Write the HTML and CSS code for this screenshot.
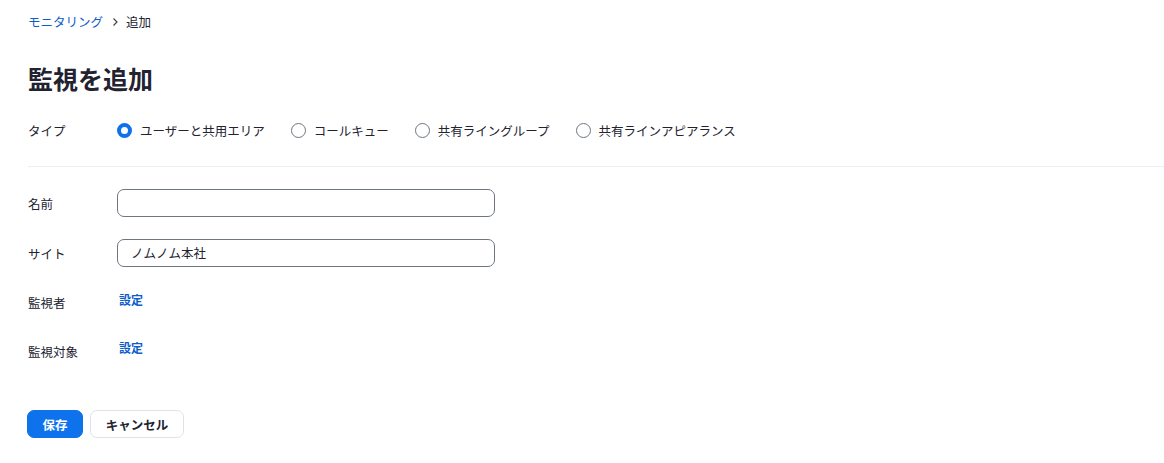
FILE: index.html
```html
<!DOCTYPE html>
<html lang="ja">

<head>
    <meta charset="utf-8">
    <title>監視を追加</title>
    <link rel="stylesheet" href="styles.css">
</head>

<body>
    <div class="page">
        <nav class="breadcrumb">
            <a href="#" class="crumb-link">モニタリング</a>
            <span class="crumb-sep">
                <svg width="8" height="10" viewBox="0 0 8 10"><path d="M2.5 1.5 L6 5 L2.5 8.5" fill="none" stroke="#444" stroke-width="1.2"/></svg>
            </span>
            <span class="crumb-current">追加</span>
        </nav>

        <h1 class="title">監視を追加</h1>

        <div class="type-row">
            <div class="label">タイプ</div>
            <div class="radio-group">
                <label class="radio-item"><span class="radio checked"></span>ユーザーと共用エリア</label>
                <label class="radio-item"><span class="radio"></span>コールキュー</label>
                <label class="radio-item"><span class="radio"></span>共有ライングループ</label>
                <label class="radio-item"><span class="radio"></span>共有ラインアピアランス</label>
            </div>
        </div>

        <div class="divider"></div>

        <div class="field-row">
            <div class="label">名前</div>
            <div class="input"></div>
        </div>

        <div class="field-row">
            <div class="label">サイト</div>
            <div class="input">ノムノム本社</div>
        </div>

        <div class="link-row">
            <div class="label">監視者</div>
            <a href="#" class="set-link">設定</a>
        </div>

        <div class="link-row">
            <div class="label label-low">監視対象</div>
            <a href="#" class="set-link">設定</a>
        </div>

        <div class="actions">
            <button class="btn btn-primary">保存</button>
            <button class="btn btn-default">キャンセル</button>
        </div>
    </div>
</body>

</html>
```

FILE: styles.css
```css
* {
    box-sizing: border-box;
    margin: 0;
    padding: 0;
}

body {
    background: #ffffff;
    color: #222230;
    font-family: "Noto Sans CJK JP", "Noto Sans", sans-serif;
    font-size: 12.5px;
}

.page {
    padding: 14px 0 0 28px;
}

.breadcrumb {
    display: flex;
    align-items: center;
    height: 16px;
    line-height: 16px;
}

.crumb-link {
    color: #0e5ec9;
    text-decoration: none;
}

.crumb-sep {
    display: flex;
    width: 23px;
    justify-content: center;
}

.crumb-current {
    color: #222230;
}

.title {
    margin-top: 32px;
    font-size: 25px;
    line-height: 32px;
    font-weight: 700;
    color: #222230;
}

.label {
    width: 89px;
    flex-shrink: 0;
    color: #222230;
}

.type-row {
    margin-top: 24px;
    height: 24px;
    display: flex;
    align-items: center;
}

.radio-group {
    display: flex;
    align-items: center;
    gap: 26px;
}

.radio-item {
    display: flex;
    align-items: center;
    gap: 8px;
}

.radio {
    width: 15px;
    height: 15px;
    border-radius: 50%;
    border: 1px solid #6e7680;
    background: #ffffff;
}

.radio.checked {
    border: 4px solid #0e72ed;
}

.divider {
    margin-top: 24px;
    border-top: 1px solid #ededf4;
}

.field-row {
    margin-top: 22px;
    display: flex;
    align-items: center;
}

.input {
    width: 378px;
    height: 28px;
    border: 1px solid #6e7680;
    border-radius: 7px;
    padding: 0 12px 0 13px;
    line-height: 26px;
    color: #222230;
}

.link-row {
    margin-top: 24px;
    height: 24px;
    display: flex;
    align-items: flex-start;
}

.link-row .label {
    padding-top: 3px;
    line-height: 18px;
}

.link-row .label-low {
    padding-top: 4px;
}

.set-link {
    margin-left: 2px;
    line-height: 18px;
    font-size: 12px;
    font-weight: 700;
    color: #0e5ec9;
    text-decoration: none;
}

.actions {
    margin-top: 47px;
    display: flex;
    gap: 7px;
    margin-left: -1px;
}

.btn {
    height: 28px;
    border-radius: 7px;
    font-family: inherit;
    font-size: 12.5px;
    font-weight: 700;
    cursor: pointer;
}

.btn-primary {
    width: 56px;
    background: #0e72ed;
    border: 1px solid #0e72ed;
    color: #ffffff;
}

.btn-default {
    width: 94px;
    background: #ffffff;
    border: 1px solid #dfe3e8;
    color: #222230;
}
```
